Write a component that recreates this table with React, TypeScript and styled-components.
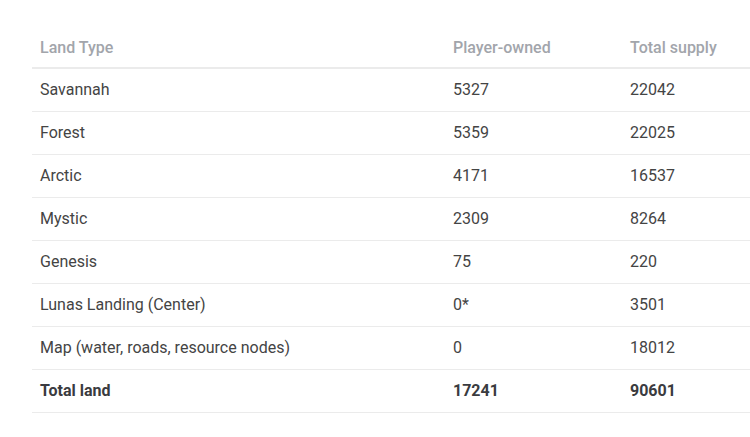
import React from "react";
import styled, { createGlobalStyle } from "styled-components";

const Global = createGlobalStyle`
  html, body { margin: 0; padding: 0; background: #ffffff; overflow: hidden; }
  body { font-family: Roboto, "Liberation Sans", Arial, sans-serif; }
  *, *::before, *::after { box-sizing: border-box; }
`;

const Page = styled.div`
  padding: 27px 0 0 32px;
  width: 750px;
  overflow: hidden;
`;

const Table = styled.table`
  width: 740px;
  border-collapse: collapse;
  table-layout: fixed;
  font-size: 16px;
`;

const Th = styled.th<{ $w?: number }>`
  width: ${(p) => (p.$w ? `${p.$w}px` : "auto")};
  height: 41px;
  padding: 0 8px;
  text-align: left;
  font-weight: 500;
  color: #a2a5ab;
  border-bottom: 2px solid #ebebeb;
  vertical-align: middle;
  white-space: nowrap;
`;

const Td = styled.td<{ $bold?: boolean }>`
  height: 43px;
  padding: 0 8px;
  text-align: left;
  color: ${(p) => (p.$bold ? "#3a3b40" : "#444444")};
  font-weight: ${(p) => (p.$bold ? 700 : 400)};
  border-bottom: 1px solid #ebebeb;
  vertical-align: middle;
  white-space: nowrap;
`;

const rows: [string, string, string][] = [
  ["Savannah", "5327", "22042"],
  ["Forest", "5359", "22025"],
  ["Arctic", "4171", "16537"],
  ["Mystic", "2309", "8264"],
  ["Genesis", "75", "220"],
  ["Lunas Landing (Center)", "0*", "3501"],
  ["Map (water, roads, resource nodes)", "0", "18012"],
];

export default function App() {
  return (
    <Page>
      <Global />
      <Table>
        <thead>
          <tr>
            <Th $w={413}>Land Type</Th>
            <Th $w={177}>Player-owned</Th>
            <Th>Total supply</Th>
          </tr>
        </thead>
        <tbody>
          {rows.map((r) => (
            <tr key={r[0]}>
              <Td>{r[0]}</Td>
              <Td>{r[1]}</Td>
              <Td>{r[2]}</Td>
            </tr>
          ))}
          <tr>
            <Td $bold>Total land</Td>
            <Td $bold>17241</Td>
            <Td $bold>90601</Td>
          </tr>
        </tbody>
      </Table>
    </Page>
  );
}
